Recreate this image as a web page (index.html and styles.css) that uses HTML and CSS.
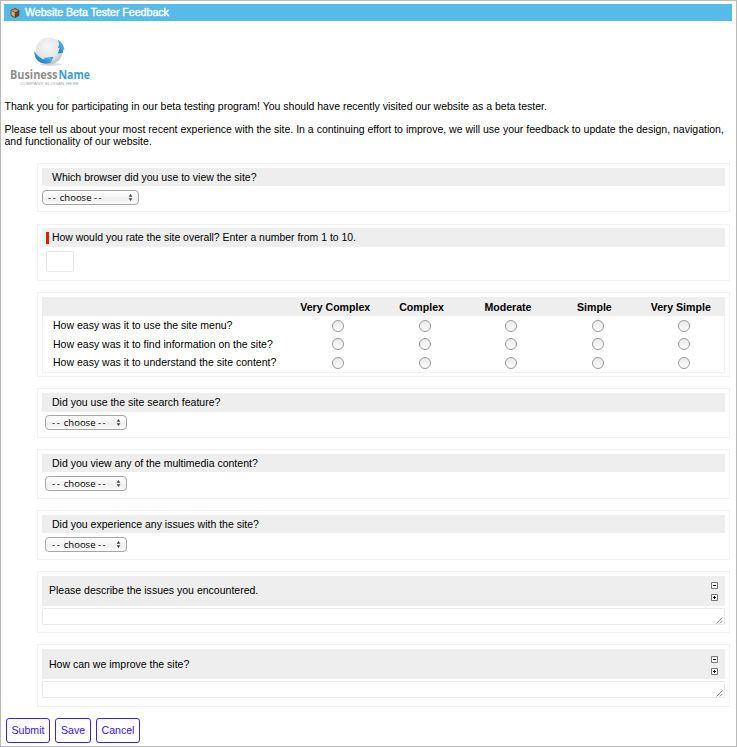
FILE: index.html
```html
<!DOCTYPE html>
<html lang="en">
<head>
<meta charset="utf-8">
<title>Website Beta Tester Feedback</title>
<link rel="stylesheet" href="styles.css">
</head>
<body>
<main class="page">
  <header class="titlebar">
    <svg class="cube" width="10" height="10" viewBox="0 0 10 10">
      <path d="M5 .5 9 2.4v5L5 9.6 1 7.4v-5z" fill="#5a3a1c" stroke="#4b4540" stroke-width=".8"/>
      <path d="M5 1 8.6 2.6 5 4.4 1.4 2.6z" fill="#c99250"/>
      <path d="M1.4 3 4.8 4.8V9L1.4 7z" fill="#e3ad68"/>
      <path d="M5.4 4.8 8.5 3.2v3.9L5.4 8.8z" fill="#70441c"/>
    </svg>
    <h1>Website Beta Tester Feedback</h1>
  </header>
  <svg class="logo" width="90" height="54" viewBox="0 0 90 54">
    <defs>
      <radialGradient id="ball" cx=".45" cy=".35" r=".68"><stop offset="0" stop-color="#f6f6f6"/><stop offset=".6" stop-color="#e6e7e8"/><stop offset="1" stop-color="#b8bec2"/></radialGradient>
      <linearGradient id="blue" x1="0" x2="1" y1="1" y2="0"><stop offset="0" stop-color="#1762a2"/><stop offset=".6" stop-color="#47b0ea"/><stop offset="1" stop-color="#1b6fae"/></linearGradient>
    </defs>
    <ellipse cx="46" cy="28.500" rx="11" ry="1.500" fill="#dedede"/>
    <circle cx="44" cy="15" r="13.500" fill="url(#ball)"/>
    <path d="M29.300 15C29 20.500 32 26 37.500 27.200 41 27.800 44.500 27.600 46.200 26.300L48.500 20.800 38.500 22 40.500 23.500C37 23.500 32.500 20.500 29.300 15z" fill="url(#blue)"/>
    <path d="M52.300 3.500C56 5 59 9 59.500 14.500L57.800 13.200 58.200 16.800 53 17.500 54.800 11.500 52.800 12C54.800 9 54 6 52.300 3.500z" fill="url(#blue)"/>
    <text class="logo-name" x="5" y="43" textLength="47.500" lengthAdjust="spacingAndGlyphs" fill="#8e8e8e">Business</text>
    <text class="logo-name" x="53.500" y="43" textLength="31.500" lengthAdjust="spacingAndGlyphs" fill="#3b9dd6">Name</text>
    <text class="logo-slogan" x="15" y="48.500" textLength="59" lengthAdjust="spacingAndGlyphs">COMPANY SLOGAN HERE</text>
  </svg>
  <p class="thanks">Thank you for participating in our beta testing program! You should have recently visited our website as a beta tester.</p>
  <p class="intro">Please tell us about your most recent experience with the site. In a continuing effort to improve, we will use your feedback to update the design, navigation,<br>and functionality of our website.</p>

  <form class="survey">
    <section class="card browser">
      <h2 class="bar">Which browser did you use to view the site?</h2>
      <div class="select wide"><span><s>--</s> choose <s>--</s></span><svg width="5" height="7" viewBox="0 0 5 7"><path d="M.6 2.700 2.500 0 4.400 2.700zM.6 4.300H4.400L2.500 7z"/></svg></div>
    </section>
    <section class="card rating">
      <h2 class="bar tall required">How would you rate the site overall? Enter a number from 1 to 10.</h2>
      <div class="number"></div>
    </section>
    <section class="card matrix-card">
      <div class="matrix">
        <div class="row head"><span></span><b>Very Complex</b><b>Complex</b><b>Moderate</b><b>Simple</b><b>Very Simple</b></div>
        <div class="row"><span>How easy was it to use the site menu?</span><i></i><i></i><i></i><i></i><i></i></div>
        <div class="row"><span>How easy was it to find information on the site?</span><i></i><i></i><i></i><i></i><i></i></div>
        <div class="row"><span>How easy was it to understand the site content?</span><i></i><i></i><i></i><i></i><i></i></div>
      </div>
    </section>
    <section class="card choice">
      <h2 class="bar tall">Did you use the site search feature?</h2>
      <div class="select"><span><s>--</s> choose <s>--</s></span><svg width="5" height="7" viewBox="0 0 5 7"><path d="M.6 2.700 2.500 0 4.400 2.700zM.6 4.300H4.400L2.500 7z"/></svg></div>
    </section>
    <section class="card choice">
      <h2 class="bar">Did you view any of the multimedia content?</h2>
      <div class="select drop"><span><s>--</s> choose <s>--</s></span><svg width="5" height="7" viewBox="0 0 5 7"><path d="M.6 2.700 2.500 0 4.400 2.700zM.6 4.300H4.400L2.500 7z"/></svg></div>
    </section>
    <section class="card choice">
      <h2 class="bar">Did you experience any issues with the site?</h2>
      <div class="select drop"><span><s>--</s> choose <s>--</s></span><svg width="5" height="7" viewBox="0 0 5 7"><path d="M.6 2.700 2.500 0 4.400 2.700zM.6 4.300H4.400L2.500 7z"/></svg></div>
    </section>
    <section class="card comment first">
      <div class="comment-bar"><h2>Please describe the issues you encountered.</h2>
        <div class="sizers"><svg width="7" height="7"><path d="M.5.500h6v6h-6z"/><path class="sign" d="M2 3.500h3"/></svg><svg width="7" height="7"><path d="M.5.500h6v6h-6z"/><path class="sign" d="M2 3.500h3M3.500 2v3"/></svg></div>
      </div>
      <div class="area"><svg width="7" height="7" viewBox="0 0 7 7"><path d="M.5 6.500 6.500.500M3.800 6.500 6.500 3.800"/></svg></div>
    </section>
    <section class="card comment">
      <div class="comment-bar"><h2>How can we improve the site?</h2>
        <div class="sizers"><svg width="7" height="7"><path d="M.5.500h6v6h-6z"/><path class="sign" d="M2 3.500h3"/></svg><svg width="7" height="7"><path d="M.5.500h6v6h-6z"/><path class="sign" d="M2 3.500h3M3.500 2v3"/></svg></div>
      </div>
      <div class="area"><svg width="7" height="7" viewBox="0 0 7 7"><path d="M.5 6.500 6.500.500M3.800 6.500 6.500 3.800"/></svg></div>
    </section>
    <footer class="actions">
      <button class="submit" type="button">Submit</button><button class="save" type="button">Save</button><button class="cancel" type="button">Cancel</button>
    </footer>
  </form>
</main>
</body>
</html>
```
FILE: styles.css
```css
* { box-sizing: border-box; }
body { margin: 0; background: #fff; color: #000; font: 10.520px/12px "Liberation Sans", Arial, sans-serif; }
h1, h2, p { margin: 0; font-size: inherit; font-weight: normal; white-space: nowrap; }
.page { width: 737px; height: 747px; overflow: hidden; border: 1px solid #b9b9b9; padding: 3px 4px 0 3px; }
.titlebar { display: flex; align-items: center; height: 17px; background: #57bbea; color: #fff; padding-left: 6px; gap: 5px; }
.titlebar h1 { font-size: 10.600px; margin-top: -1px; -webkit-text-stroke: .4px #fff; }
.cube { display: block; margin-top: 1px; }
.logo { display: block; margin: 15px 0 0 1px; overflow: visible; }
.logo-name { font: bold 12.500px "Open Sans", sans-serif; }
.logo-slogan { font: 3.200px "Liberation Sans", sans-serif; fill: #a5a5a5; }
.thanks { margin-top: 10px; padding-left: .5px; }
.intro { margin-top: 11px; padding-left: .5px; }
.survey { margin: 16px 2px 0 33px; }
.card { border: 1px solid #f2f2f2; padding: 4px; margin-bottom: 11px; background: #fff; }
.browser { height: 49px; margin-bottom: 12px; }
.bar { height: 18px; background: #eee; padding-left: 10px; line-height: 18px; }
.bar.tall { height: 19px; line-height: 19px; }
.select { display: flex; align-items: center; justify-content: space-between; width: 82px; height: 15px; margin: 3px 0 0 3px; padding: 0 5px 0 6px; border: 1px solid #a6a6a6; border-radius: 4px; background: linear-gradient(#fff, #f3f3f3 50%, #ececec 51%, #fcfcfc); font: 9.500px/13px "Open Sans", sans-serif; }
.select span { white-space: nowrap; }
.select s { text-decoration: none; letter-spacing: 1.600px; }
.select.drop { margin-top: 4px; }
.select.wide { width: 97px; margin: 4px 0 0; padding-left: 5px; }
.select svg { display: block; fill: #444; }
.rating { height: 57px; padding-top: 3px; }
.required { display: flex; align-items: center; padding-left: 4px; font-size: 10.450px; }
.required::before { content: ""; width: 3px; height: 12px; margin-right: 3px; background: #d81e05; }
.number { width: 28px; height: 21px; margin: 4px 0 0 4px; border: 1px solid #e8e8e8; border-radius: 2px; }
.matrix-card { height: 85px; }
.matrix { height: 76px; border: 1px solid #f2f2f2; border-top: 0; }
.row { display: grid; grid-template-columns: 249px repeat(5, 86.400px); height: 18.500px; align-items: center; }
.row.head { height: 19px; background: #eee; margin: 0 -1px; padding-left: 1px; font-size: 10.600px; }
.row span { padding-left: 10px; white-space: nowrap; }
.row b { text-align: center; }
.row i { justify-self: center; width: 12px; height: 12px; margin: 1px 0 0 6.500px; border: 1px solid #999; border-radius: 50%; background: linear-gradient(#e9e9e9, #fdfdfd); }
.choice { height: 50px; }
.comment { height: 63px; }
.comment.first { height: 62px; }
.comment-bar { display: flex; align-items: center; justify-content: space-between; height: 30px; background: #eee; padding: 0 7px; }
.comment.first h2 { margin-top: -2px; }
.sizers { display: grid; gap: 5px; padding-top: 2px; }
.comment.first .sizers { padding-top: 0; }
.sizers svg { display: block; fill: #f8f8f8; stroke: #777; stroke-width: 1; }
.sizers .sign { stroke: #000; }
.area { display: flex; align-items: flex-end; justify-content: flex-end; height: 17px; margin-top: 2px; border: 1px solid #e9e9e9; border-radius: 2px; padding: 0 1px 0 0; }
.area svg { display: block; stroke: #777; stroke-width: .8; fill: none; }
.actions { display: flex; gap: 5px; margin-left: -31px; }
button { height: 25px; padding: 0 0 1px; border: 1px solid #4021e8; border-radius: 3px; background: #fff; color: #3813ee; font: 10.600px "Liberation Sans", sans-serif; }
.submit { width: 44px; }
.save { width: 36px; }
.cancel { width: 44px; }
```
